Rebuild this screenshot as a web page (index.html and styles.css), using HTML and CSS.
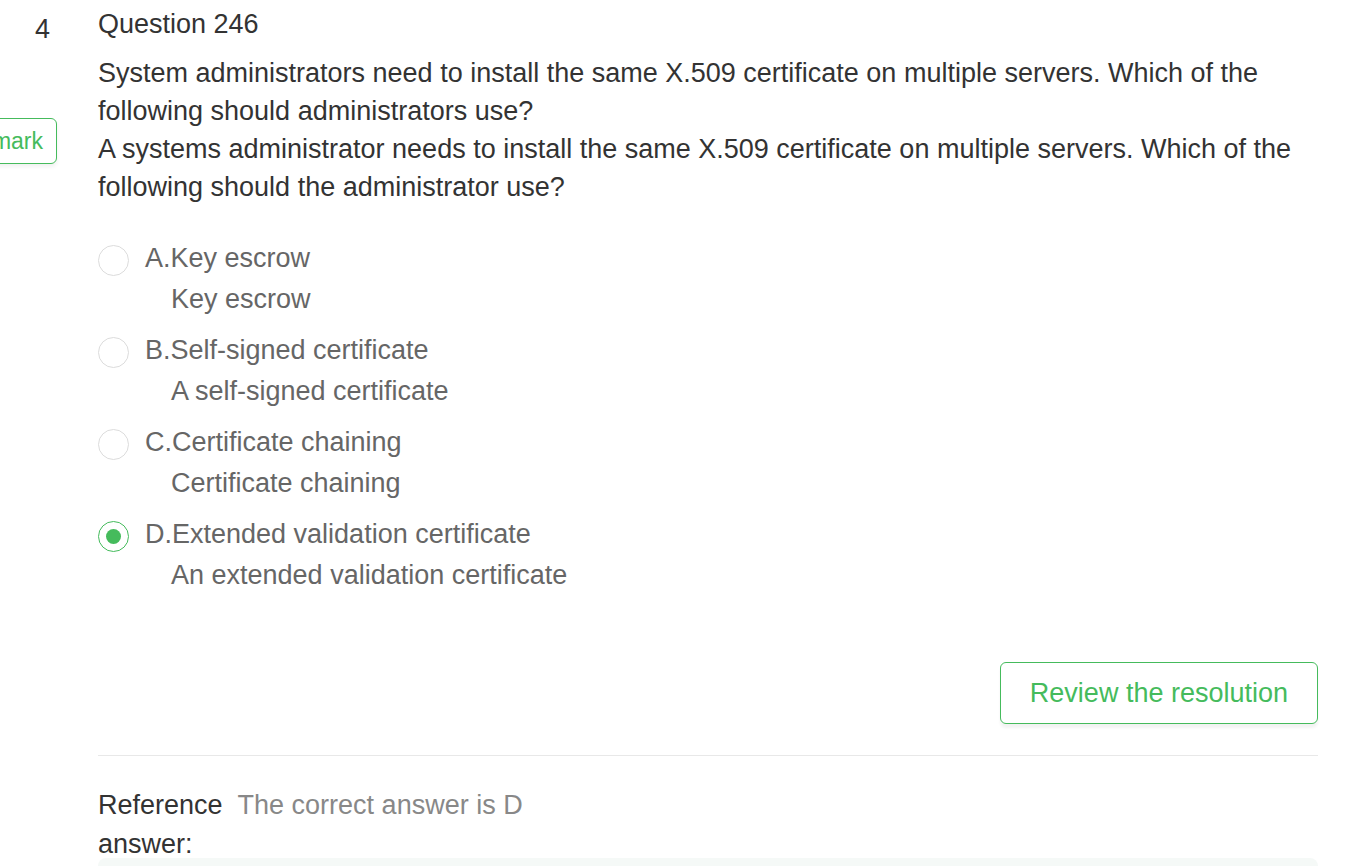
FILE: index.html
```html
<!DOCTYPE html>
<html lang="en">
<head>
<meta charset="utf-8">
<title>Question 246</title>
<link rel="stylesheet" href="styles.css">
</head>
<body>
<div class="question">
  <div class="side">
    <div class="num">4</div>
    <button class="mark-btn" type="button">Bookmark</button>
  </div>
  <div class="main">
    <h2 class="title">Question 246</h2>
    <div class="stem">
      <p>System administrators need to install the same X.509 certificate on multiple servers. Which of the following should administrators use?</p>
      <p>A systems administrator needs to install the same X.509 certificate on multiple servers. Which of the following should the administrator use?</p>
    </div>
    <ul class="options">
      <li class="option">
        <span class="radio"></span>
        <div class="opt-text">
          <div class="opt-label">A.Key escrow</div>
          <div class="opt-sub">Key escrow</div>
        </div>
      </li>
      <li class="option">
        <span class="radio"></span>
        <div class="opt-text">
          <div class="opt-label">B.Self-signed certificate</div>
          <div class="opt-sub">A self-signed certificate</div>
        </div>
      </li>
      <li class="option">
        <span class="radio"></span>
        <div class="opt-text">
          <div class="opt-label">C.Certificate chaining</div>
          <div class="opt-sub">Certificate chaining</div>
        </div>
      </li>
      <li class="option">
        <span class="radio checked"></span>
        <div class="opt-text">
          <div class="opt-label">D.Extended validation certificate</div>
          <div class="opt-sub">An extended validation certificate</div>
        </div>
      </li>
    </ul>
    <div class="actions">
      <button class="review-btn" type="button">Review the resolution</button>
    </div>
    <hr class="divider">
    <div class="reference">
      <div class="ref-row"><span class="ref-label">Reference</span><span class="ref-value">The correct answer is D</span></div>
      <div class="ref-label">answer:</div>
    </div>
    <div class="analysis"></div>
  </div>
</div>
</body>
</html>
```

FILE: styles.css
```css
html, body {
  margin: 0;
  padding: 0;
  background: #ffffff;
}
body {
  font-family: "Liberation Sans", Arial, sans-serif;
  font-size: 27px;
  color: #333333;
  overflow: hidden;
}
.question {
  display: grid;
  grid-template-columns: 98px 1fr;
  padding-right: 33px;
}
.side {
  position: relative;
}
.num {
  padding-left: 35px;
  padding-top: 10px;
  line-height: 38px;
  color: #333;
}
.mark-btn {
  position: absolute;
  top: 118px;
  right: 41px;
  height: 46px;
  padding: 0 13px;
  font-family: "Liberation Sans", Arial, sans-serif;
  font-size: 23px;
  color: #45bb5c;
  background: #fff;
  border: 1px solid #45bb5c;
  border-radius: 6px;
  box-shadow: 0 3px 4px rgba(0, 0, 0, 0.06);
}
.main {
  min-width: 0;
}
.title {
  margin: 0;
  padding-top: 5px;
  font-size: 27px;
  font-weight: normal;
  line-height: 38px;
  color: #333;
}
.stem {
  margin-top: 11px;
}
.stem p {
  margin: 0;
  line-height: 38px;
  color: #333;
}
.options {
  list-style: none;
  margin: 33px 0 0;
  padding: 0;
}
.option {
  display: flex;
  align-items: flex-start;
  gap: 16px;
  margin-bottom: 13px;
}
.radio {
  flex: none;
  box-sizing: border-box;
  width: 31px;
  height: 31px;
  margin-top: 6px;
  border: 1px solid #dcdcdc;
  border-radius: 50%;
  display: flex;
  align-items: center;
  justify-content: center;
}
.radio.checked {
  border-color: #45bb5c;
}
.radio.checked::after {
  content: "";
  width: 15px;
  height: 15px;
  border-radius: 50%;
  background: #45bb5c;
}
.opt-label {
  line-height: 38px;
  color: #666;
}
.opt-sub {
  margin-top: 3px;
  padding-left: 26px;
  line-height: 38px;
  color: #666;
}
.actions {
  display: flex;
  justify-content: flex-end;
  margin-top: 68px;
}
.review-btn {
  height: 62px;
  padding: 0 29px;
  font-family: "Liberation Sans", Arial, sans-serif;
  font-size: 27px;
  color: #45bb5c;
  background: #fff;
  border: 1px solid #45bb5c;
  border-radius: 6px;
  box-shadow: 0 4px 3px rgba(0, 0, 0, 0.05);
}
.divider {
  margin: 31px 0 0;
  border: 0;
  border-top: 1px solid #e8e8e8;
}
.reference {
  margin-top: 30px;
}
.ref-row {
  display: flex;
  gap: 15px;
}
.ref-label {
  line-height: 39px;
  color: #333;
}
.ref-value {
  line-height: 39px;
  color: #888;
}
.analysis {
  margin-top: -6px;
  height: 60px;
  background: #f5f9f7;
  border-radius: 8px;
}
```
